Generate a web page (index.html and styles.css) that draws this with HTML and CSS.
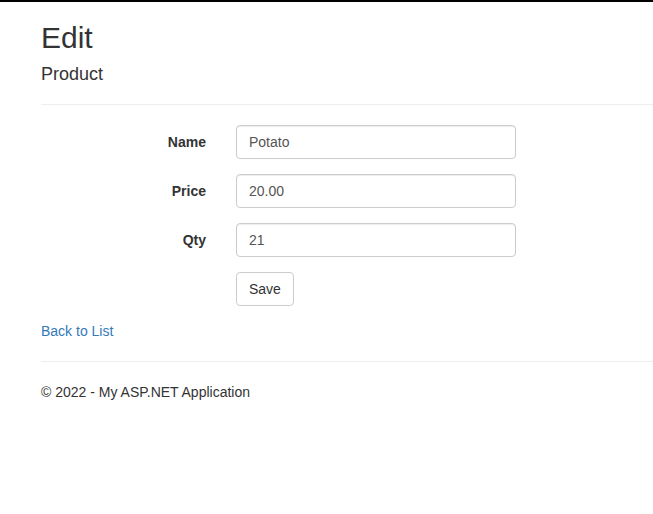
FILE: index.html
```html
<!DOCTYPE html>
<html>
<head>
<meta charset="utf-8">
<title>Edit</title>
<link rel="stylesheet" href="styles.css">
</head>
<body>
<div class="topbar"></div>
<div class="container">
  <h2 class="title">Edit</h2>
  <form class="form">
    <h4 class="subtitle">Product</h4>
    <hr class="rule">
    <div class="form-group">
      <label class="label">Name</label>
      <input class="input" type="text" value="Potato">
    </div>
    <div class="form-group">
      <label class="label">Price</label>
      <input class="input" type="text" value="20.00">
    </div>
    <div class="form-group">
      <label class="label">Qty</label>
      <input class="input" type="text" value="21">
    </div>
    <div class="form-group">
      <span class="label"></span>
      <button class="btn" type="button">Save</button>
    </div>
  </form>
  <div class="back"><a href="#" class="link">Back to List</a></div>
  <hr class="rule">
  <footer class="footer">
    <p class="footer-text">&copy; 2022 - My ASP.NET Application</p>
  </footer>
</div>
</body>
</html>
```

FILE: styles.css
```css
* { box-sizing: border-box; }
html, body {
  margin: 0;
  padding: 0;
  background: #fff;
}
body {
  font-family: "Liberation Sans", Arial, Helvetica, sans-serif;
  font-size: 14px;
  line-height: 20px;
  color: #333;
}
.topbar {
  height: 2px;
  background: #000;
}
.container {
  padding-left: 41px;
  padding-top: 19px;
}
.title {
  margin: 0 0 10px 0;
  font-size: 30px;
  font-weight: 500;
  line-height: 33px;
  color: #333;
}
.form { margin: 0; }
.subtitle {
  margin: 0;
  font-size: 18px;
  font-weight: 500;
  line-height: 20px;
  color: #333;
}
.rule {
  margin: 20px 0;
  border: 0;
  border-top: 1px solid #eee;
  height: 0;
}
.form-group {
  display: flex;
  align-items: flex-start;
  gap: 30px;
  margin-bottom: 15px;
}
.label {
  width: 165px;
  flex: none;
  text-align: right;
  font-weight: bold;
  padding-top: 7px;
  line-height: 20px;
}
.input {
  width: 280px;
  height: 34px;
  padding: 6px 12px;
  font-family: inherit;
  font-size: 14px;
  line-height: 20px;
  color: #555;
  background: #fff;
  border: 1px solid #ccc;
  border-radius: 4px;
  box-shadow: inset 0 1px 1px rgba(0,0,0,.075);
  margin: 0;
}
.btn {
  height: 34px;
  padding: 6px 12px;
  font-family: inherit;
  font-size: 14px;
  line-height: 20px;
  color: #333;
  background: #fff;
  border: 1px solid #ccc;
  border-radius: 4px;
  margin: 0;
}
.back { line-height: 20px; }
.link {
  color: #337ab7;
  text-decoration: none;
}
.footer-text {
  margin: 0;
}
.footer { padding-bottom: 20px; }
```
